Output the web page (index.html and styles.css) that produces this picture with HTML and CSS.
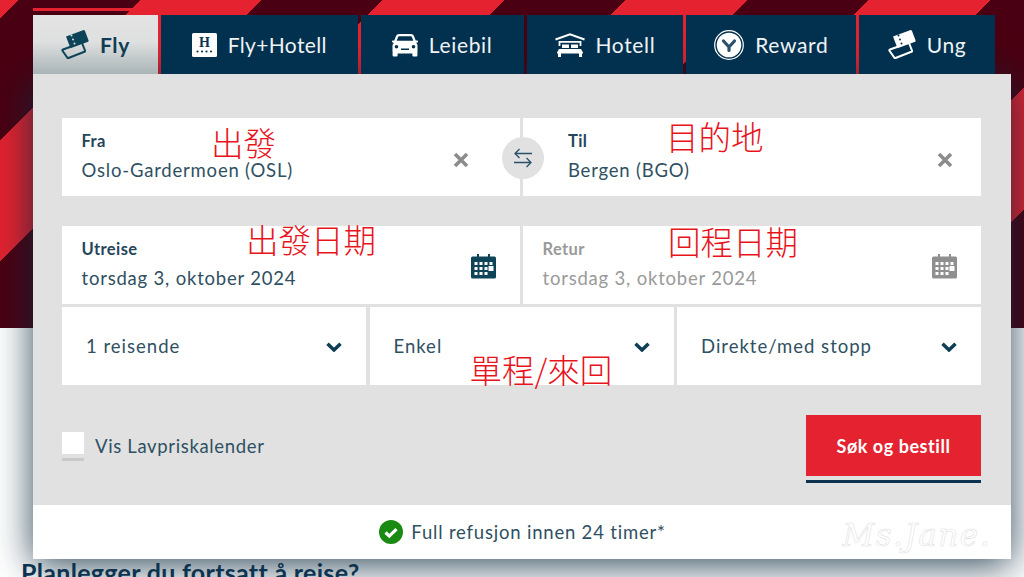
FILE: index.html
```html
<!DOCTYPE html>
<html lang="no">
<head>
<meta charset="utf-8">
<title>Fly</title>
<link rel="stylesheet" href="styles.css">
</head>
<body>
<div class="page">
  <nav class="tabs">
    <a class="tab tab-fly active">
      <svg class="ico ico-ticket" viewBox="0 0 28 31"><path class="fill" d="M5 7.500 22 1.200a1.500 1.500 0 0 1 2 .9l3.400 9a1.500 1.500 0 0 1-.9 2L9.500 19.300z"/><path class="line" d="M2 20.500 9 18 M21 14l3 7.500a1 1 0 0 1-.6 1.300L7.500 29a1 1 0 0 1-1.300-.6L1.300 21.500a1 1 0 0 1 .7-1"/><g class="dots"><circle cx="10.500" cy="6.500" r="1"/><circle cx="12" cy="10.500" r="1"/><circle cx="13.500" cy="14.500" r="1"/></g></svg>
      <span>Fly</span>
    </a>
    <a class="tab tab-hotel">
      <svg class="ico ico-h" viewBox="0 0 25 24"><rect width="25" height="24" rx="1.500" fill="#fff"/><text x="12.500" y="13.500" text-anchor="middle" class="h-letter">H</text><g fill="#0b3550"><circle cx="5.500" cy="18.500" r="1.100"/><circle cx="10" cy="18.500" r="1.100"/><circle cx="14.500" cy="18.500" r="1.100"/><circle cx="19" cy="18.500" r="1.100"/></g></svg>
      <span>Fly+Hotell</span>
    </a>
    <a class="tab tab-car">
      <svg class="ico ico-car" viewBox="0 0 26 24"><path fill="#fff" d="M7 1h12c1.400 0 2.400.7 3 2l1.700 4.500H25.200a.8.8 0 0 1 .8.8v.5a.8.8 0 0 1-.7.8l-1.100.2c.8.800 1.300 1.800 1.300 3V19h-.1v3.500a1 1 0 0 1-1 1h-3a1 1 0 0 1-1-1V20.500H5.600v2a1 1 0 0 1-1 1h-3a1 1 0 0 1-1-1V19H.500v-6c0-1.200.5-2.200 1.300-3L.700 9.600A.8.8 0 0 1 0 8.800v-.5a.8.8 0 0 1 .8-.8h1.500L4 3c.6-1.300 1.600-2 3-2zM7.200 3.300c-.6 0-1 .3-1.200.9L4.700 7.800h16.600L20 4.200c-.2-.6-.6-.9-1.200-.9zM4.500 12a1.800 1.800 0 1 0 0 3.600 1.800 1.800 0 0 0 0-3.600zm17 0a1.800 1.800 0 1 0 0 3.600 1.800 1.800 0 0 0 0-3.600zM9 15.500v1.500h8v-1.500z" fill-rule="evenodd"/></svg>
      <span>Leiebil</span>
    </a>
    <a class="tab tab-bed">
      <svg class="ico ico-bed" viewBox="0 0 30 24"><path fill="none" stroke="#fff" stroke-width="2" d="M.5 6.500 15 1.200 29.500 6.500"/><path fill="none" stroke="#fff" stroke-width="1.800" d="M4.500 13V8.800h21V13"/><path fill="#fff" d="M7 11.500h7V15H7zM16 11.500h7V15h-7zM4 16h22l2 3.500v1H2v-1zM3 20.500h3V24H3zM24 20.500h3V24h-3z"/></svg>
      <span>Hotell</span>
    </a>
    <a class="tab tab-reward">
      <svg class="ico ico-reward" viewBox="0 0 30 30"><circle cx="15" cy="15" r="14.300" fill="none" stroke="#fff" stroke-width="1.200"/><circle cx="15" cy="15" r="12.300" fill="#fff"/><path fill="none" stroke="#2c5068" stroke-width="3.200" stroke-linecap="round" d="M9.500 11 15 17l5.500-6M15 17v3.500"/></svg>
      <span>Reward</span>
    </a>
    <a class="tab tab-ung">
      <svg class="ico ico-ticket" viewBox="0 0 28 31"><path class="fill" d="M5 7.500 22 1.200a1.500 1.500 0 0 1 2 .9l3.400 9a1.500 1.500 0 0 1-.9 2L9.500 19.300z"/><path class="line" d="M2 20.500 9 18 M21 14l3 7.500a1 1 0 0 1-.6 1.300L7.500 29a1 1 0 0 1-1.300-.6L1.300 21.500a1 1 0 0 1 .7-1"/><g class="dots"><circle cx="10.500" cy="6.500" r="1"/><circle cx="12" cy="10.500" r="1"/><circle cx="13.500" cy="14.500" r="1"/></g></svg>
      <span>Ung</span>
    </a>
  </nav>

  <section class="panel">
    <div class="form">
      <div class="pair route">
        <div class="field">
          <div class="field-text"><div class="label">Fra</div><div class="value">Oslo-Gardermoen (OSL)</div></div>
          <svg class="clear" viewBox="0 0 16 16"><path d="M2 2l12 12M14 2 2 14"/></svg>
          <span class="note note-from">出發</span>
        </div>
        <div class="field field-to">
          <div class="field-text"><div class="label">Til</div><div class="value">Bergen (BGO)</div></div>
          <svg class="clear" viewBox="0 0 16 16"><path d="M2 2l12 12M14 2 2 14"/></svg>
          <span class="note note-to">目的地</span>
        </div>
        <div class="swap">
          <svg viewBox="0 0 22 22"><path d="M20 6.500H3M7.500 2 3 6.500 7.500 11M2 15.500h17M14.500 11l4.500 4.500-4.500 4.500"/></svg>
        </div>
      </div>

      <div class="pair dates">
        <div class="field">
          <div class="field-text"><div class="label">Utreise</div><div class="value">torsdag 3, oktober 2024</div></div>
          <svg class="cal" viewBox="0 0 25 25"><rect y="2.500" width="25" height="22" rx="1.500"/><path d="M6 0h2v4H6zM17 0h2v4h-2z"/><g class="cal-dots"><rect x="3.500" y="8" width="3" height="3"/><rect x="8.500" y="8" width="3" height="3"/><rect x="13.500" y="8" width="3" height="3"/><rect x="18.500" y="8" width="3" height="3"/><rect x="3.500" y="13" width="3" height="3"/><rect x="8.500" y="13" width="3" height="3"/><rect x="13.500" y="13" width="3" height="3"/><rect x="3.500" y="18" width="3" height="3"/><rect x="8.500" y="18" width="3" height="3"/><rect x="13.500" y="18" width="3" height="3"/><rect x="17.500" y="12" width="5" height="5"/></g></svg>
          <span class="note note-out">出發日期</span>
        </div>
        <div class="field muted">
          <div class="field-text"><div class="label">Retur</div><div class="value">torsdag 3, oktober 2024</div></div>
          <svg class="cal" viewBox="0 0 25 25"><rect y="2.500" width="25" height="22" rx="1.500"/><path d="M6 0h2v4H6zM17 0h2v4h-2z"/><g class="cal-dots"><rect x="3.500" y="8" width="3" height="3"/><rect x="8.500" y="8" width="3" height="3"/><rect x="13.500" y="8" width="3" height="3"/><rect x="18.500" y="8" width="3" height="3"/><rect x="3.500" y="13" width="3" height="3"/><rect x="8.500" y="13" width="3" height="3"/><rect x="13.500" y="13" width="3" height="3"/><rect x="3.500" y="18" width="3" height="3"/><rect x="8.500" y="18" width="3" height="3"/><rect x="13.500" y="18" width="3" height="3"/><rect x="17.500" y="12" width="5" height="5"/></g></svg>
          <span class="note note-back">回程日期</span>
        </div>
      </div>

      <div class="triple">
        <div class="select"><span>1 reisende</span><svg class="chev" viewBox="0 0 16 10"><path d="M1.500 1.800 8 8l6.500-6.200"/></svg></div>
        <div class="select"><span>Enkel</span><svg class="chev" viewBox="0 0 16 10"><path d="M1.500 1.800 8 8l6.500-6.200"/></svg><span class="note note-trip">單程/來回</span></div>
        <div class="select"><span>Direkte/med stopp</span><svg class="chev" viewBox="0 0 16 10"><path d="M1.500 1.800 8 8l6.500-6.200"/></svg></div>
      </div>

      <div class="actions">
        <label class="check"><span class="box"></span><span class="check-text">Vis Lavpriskalender</span></label>
        <div class="submit"><button class="btn" type="button">Søk og bestill</button><span class="btn-line"></span></div>
      </div>
    </div>

    <div class="refund">
      <svg class="ok" viewBox="0 0 24 24"><circle cx="12" cy="12" r="12" fill="#1b8a12"/><path d="M6.500 12.500l3.800 3.600 7.200-7" fill="none" stroke="#fff" stroke-width="3.200"/></svg>
      <span>Full refusjon innen 24 timer*</span>
      <span class="mark">Ms.Jane.</span>
    </div>
  </section>

  <h2 class="next">Planlegger du fortsatt å reise?</h2>
</div>
</body>
</html>
```
FILE: styles.css
```css
* { box-sizing: border-box; }
html, body { margin: 0; padding: 0; }
body { background: #fff; font-family: "Lato", "Noto Sans CJK TC", sans-serif; color: #24465a; }

.page {
  width: 1024px;
  height: 577px;
  overflow: hidden;
  padding-top: 15px;
  background-color: #fff;
  background-image: repeating-linear-gradient(135deg, #e42230 0, #e42230 13.4px, #4a0012 13.4px, #4a0012 99px, #e42230 99px, #e42230 171.8px);
  background-size: 100% 328px;
  background-repeat: no-repeat;
}

/* tabs */
.tabs { display: flex; gap: 3px; margin-left: 33px; width: 962px; height: 59px; }
.tab {
  display: flex; align-items: center; justify-content: center; gap: 11px;
  background: #02314f; color: #eef3f5;
  font-size: 21px; letter-spacing: .65px;
}
.tab-fly { width: 125px; position: relative; }
.tab-hotel { width: 197px; letter-spacing: .35px; }
.tab-car { width: 163px; }
.tab-bed { width: 157px; }
.tab-reward { width: 170px; }
.tab-ung { width: 136px; }
.tab.active {
  background: linear-gradient(#e3e3e3 0, #dfe0e0 45%, #a9b4b7 100%);
  color: #0f3d54; font-weight: 700;
}
.tab-fly::before { content: ""; position: absolute; left: 0; right: 0; top: -7px; height: 3px; background: #e42230; }

.ico { display: block; flex: none; }
.ico-ticket { width: 28px; height: 31px; }
.ico-h { width: 25px; height: 24px; }
.ico-car { width: 26px; height: 24px; }
.ico-bed { width: 30px; height: 24px; }
.ico-reward { width: 30px; height: 30px; }
.h-letter { font-family: "Liberation Serif", serif; font-weight: 700; font-size: 14px; fill: #0b3550; }

.ico-ticket .fill { fill: #fff; }
.ico-ticket .line { fill: none; stroke: #fff; stroke-width: 2; stroke-linecap: round; }
.ico-ticket .dots { fill: #02314f; }
.active .ico-ticket .fill { fill: #0e4458; }
.active .ico-ticket .line { stroke: #0e4458; }
.active .ico-ticket .dots { fill: #dfe0e0; }

/* panel */
.panel {
  width: 978px; margin-left: 33px;
  box-shadow: 0 6px 36px rgba(10, 40, 60, .85);
}
.form { background: #e1e1e1; padding: 44px 30px 22px 29px; display: flex; flex-direction: column; }

.pair { display: grid; grid-template-columns: 458px 458px; column-gap: 3px; position: relative; }
.route { margin-bottom: 30px; }
.dates { margin-bottom: 3px; }

.field {
  position: relative; background: #fff; height: 78px;
  display: flex; align-items: center; justify-content: space-between;
  padding: 0 0 0 19.500px;
}
.field-to { padding-left: 45px; }
.field-text { display: flex; flex-direction: column; gap: 10px; padding-bottom: 1px; }
.label { font-size: 16.500px; line-height: 17px; font-weight: 700; color: #24465a; letter-spacing: .4px; }
.value { font-size: 18.500px; line-height: 21px; color: #2f5062; letter-spacing: .8px; }
.muted .label { color: #9a9a9a; }
.muted .value { color: #9a9a9a; }

.clear { width: 16px; height: 16px; margin: 5px 51px 0 0; flex: none; }
.clear path { fill: none; stroke: #8c8c8c; stroke-width: 3.600; }
.field-to .clear { margin-right: 28px; }

.cal { width: 25px; height: 25px; flex: none; margin: 3px 24px 0 0; fill: #0e4458; }
.cal-dots { fill: #fff; }
.muted .cal { fill: #8f8f8f; }

.swap {
  position: absolute; left: 440px; top: 19px;
  width: 42px; height: 42px; border-radius: 50%; background: #e1e1e1;
  display: flex; align-items: center; justify-content: center;
}
.swap svg { width: 22px; height: 22px; fill: none; stroke: #2a5068; stroke-width: 1.300; }

.triple { display: grid; grid-template-columns: repeat(3, 1fr); column-gap: 3.500px; }
.select {
  position: relative; background: #fff; height: 78px;
  display: flex; align-items: center; justify-content: space-between;
  padding: 0 24px 0 24px;
  font-size: 18.500px; color: #2f5062; letter-spacing: 1px;
}
.chev { width: 16px; height: 10px; flex: none; margin-top: 2px; }
.chev path { fill: none; stroke: #0e3f55; stroke-width: 3.500; }

.note {
  position: absolute; color: #e8141c; font-size: 32.500px; line-height: 40px; white-space: nowrap;
  font-family: "Noto Sans CJK TC", sans-serif; font-weight: 300; letter-spacing: 0;
}
.note-from { left: 149px; top: 4px; }
.note-to { left: 143px; top: -2px; }
.note-out { left: 184px; top: -7px; }
.note-back { left: 145px; top: -5px; }
.note-trip { left: 100px; top: 42px; }

.actions { display: flex; justify-content: space-between; align-items: flex-start; margin-top: 30px; }
.check { display: flex; align-items: center; gap: 11px; margin-top: 17px; }
.box { display: block; width: 22px; height: 29px; background: linear-gradient(#fff 0, #fff 22px, transparent 22px, transparent 26px, #c9c9c9 26px); }
.check-text { font-size: 18.500px; letter-spacing: .65px; color: #2f5062; margin-top: -1px; }

.submit { width: 175px; display: flex; flex-direction: column; gap: 4px; }
.btn {
  height: 61px; border: 0; background: #e42230; color: #fff; padding: 0;
  font: 700 18px "Lato", sans-serif; letter-spacing: .55px;
}
.btn-line { display: block; height: 3px; background: #0d3350; }

.refund {
  position: relative; background: #fff; height: 54px;
  display: flex; align-items: center; justify-content: center; gap: 8px;
  font-size: 18.500px; letter-spacing: .8px; color: #2f5062;
  padding-left: 1px;
}
.ok { width: 24px; height: 24px; flex: none; }
.mark {
  position: absolute; right: 20px; top: 12px;
  font-family: "DejaVu Serif", serif; font-style: italic; font-size: 31px; letter-spacing: 1.500px;
  color: #fff; -webkit-text-stroke: .5px #dcdcdc;
}

.next {
  margin: -2px 0 0 21px; font-size: 25px; line-height: 30px; font-weight: 700; color: #0d3350;
  letter-spacing: .3px; white-space: nowrap;
}
```
